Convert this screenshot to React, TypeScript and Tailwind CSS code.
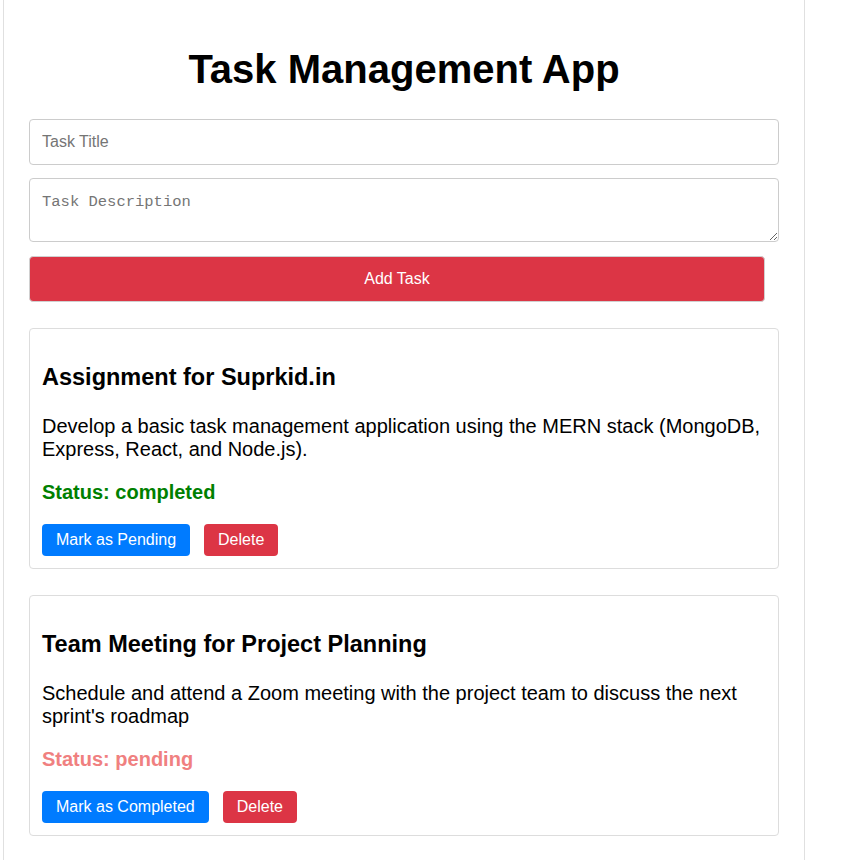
import { useState } from "react";

interface Task {
  id: number;
  title: string;
  description: string;
  status: "pending" | "completed";
}

const initialTasks: Task[] = [
  {
    id: 1,
    title: "Assignment for Suprkid.in",
    description:
      "Develop a basic task management application using the MERN stack (MongoDB, Express, React, and Node.js).",
    status: "completed",
  },
  {
    id: 2,
    title: "Team Meeting for Project Planning",
    description:
      "Schedule and attend a Zoom meeting with the project team to discuss the next sprint's roadmap",
    status: "pending",
  },
];

function TaskCard({
  task,
  onToggle,
  onDelete,
}: {
  task: Task;
  onToggle: () => void;
  onDelete: () => void;
}) {
  const done = task.status === "completed";
  return (
    <div className="w-[750px] border border-[#ddd] rounded-[4px] px-[12px] pb-[12px] pt-[35px] mb-[26px]">
      <h2 className="text-[23.5px] leading-[26px] font-bold text-black">
        {task.title}
      </h2>
      <p className="mt-[25px] text-[20px] leading-[23px] text-black">
        {task.description}
      </p>
      <p
        className={`mt-[20px] text-[20px] leading-[23px] font-bold ${
          done ? "text-[#008000]" : "text-[#f08080]"
        }`}
      >
        Status: {task.status}
      </p>
      <div className="mt-[20px] flex gap-[14px]">
        <button
          onClick={onToggle}
          className="h-[32px] px-[14px] rounded-[4px] bg-[#007bff] text-white text-[16px]"
        >
          {done ? "Mark as Pending" : "Mark as Completed"}
        </button>
        <button
          onClick={onDelete}
          className="h-[32px] px-[14px] rounded-[4px] bg-[#dc3545] text-white text-[16px]"
        >
          Delete
        </button>
      </div>
    </div>
  );
}

export default function App() {
  const [tasks, setTasks] = useState<Task[]>(initialTasks);
  const [title, setTitle] = useState("");
  const [description, setDescription] = useState("");

  const addTask = () => {
    if (!title.trim()) return;
    setTasks([
      ...tasks,
      { id: Date.now(), title, description, status: "pending" },
    ]);
    setTitle("");
    setDescription("");
  };

  return (
    <div className="min-h-screen bg-white font-['Liberation_Sans',Arial,sans-serif]">
      <div className="ml-[3px] w-[802px] border-x border-b border-[#e0e0e0] px-[25px] pt-[46px] pb-[20px]">
        <h1 className="text-[40px] leading-[46px] font-bold text-center text-black">
          Task Management App
        </h1>

        <input
          type="text"
          value={title}
          onChange={(e) => setTitle(e.target.value)}
          placeholder="Task Title"
          className="mt-[27px] block w-[750px] h-[46px] px-[12px] border border-[#ccc] rounded-[4px] text-[16px] placeholder:text-[#757575] outline-none"
        />
        <textarea
          value={description}
          onChange={(e) => setDescription(e.target.value)}
          placeholder="Task Description"
          className="mt-[13px] block w-[750px] h-[64px] px-[12px] pt-[15px] border border-[#ccc] rounded-[4px] text-[15.5px] leading-[17px] font-['Liberation_Mono',monospace] placeholder:text-[#757575] outline-none"
        />
        <button
          onClick={addTask}
          className="mt-[14px] block w-[736px] h-[46px] rounded-[4px] border border-[#d0d0d0] bg-[#dc3545] text-white text-[16px]"
        >
          Add Task
        </button>

        <div className="mt-[26px]">
          {tasks.map((t) => (
            <TaskCard
              key={t.id}
              task={t}
              onToggle={() =>
                setTasks(
                  tasks.map((x) =>
                    x.id === t.id
                      ? {
                          ...x,
                          status:
                            x.status === "completed" ? "pending" : "completed",
                        }
                      : x
                  )
                )
              }
              onDelete={() => setTasks(tasks.filter((x) => x.id !== t.id))}
            />
          ))}
        </div>
      </div>
    </div>
  );
}
